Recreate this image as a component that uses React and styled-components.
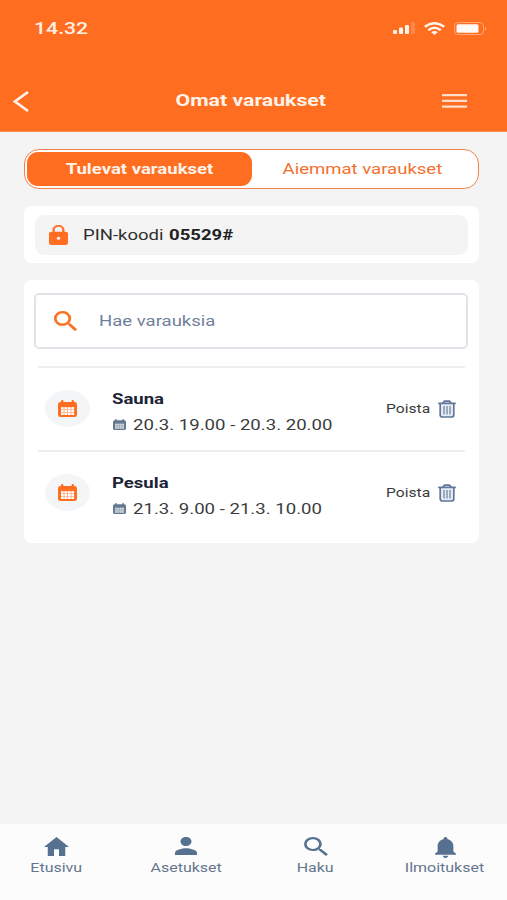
import React from "react";
import styled, { createGlobalStyle, css } from "styled-components";

const GlobalStyle = createGlobalStyle`
  * { box-sizing: border-box; }
  body { margin: 0; background: #f4f4f4; font-family: Roboto, "Liberation Sans", sans-serif; }
  button { font: inherit; border: 0; padding: 0; background: none; color: inherit; }
`;

const Screen = styled.div`
  width: 507px;
  height: 900px;
  display: flex;
  flex-direction: column;
  overflow: hidden;
  background: #f4f4f4;
`;

/* Wide lettering: Roboto widened horizontally around its anchor side. */
const Text = styled.span`
  display: inline-block;
  white-space: nowrap;
  line-height: 20px;
  font-size: ${(p) => p.$size || 15}px;
  font-weight: ${(p) => p.$weight || 400};
  color: ${(p) => p.$color || "#333"};
  transform: scaleX(${(p) => p.$wide || 1.22});
  transform-origin: ${(p) => (p.$anchor || "left")} center;
`;

const Icon = styled.svg.attrs({ preserveAspectRatio: "none" })`
  display: block;
  flex: none;
  width: ${(p) => p.$w}px;
  height: ${(p) => p.$h}px;
  fill: ${(p) => p.$color || "#56708f"};
`;

const Header = styled.header`
  height: 132px;
  flex: none;
  background: #ff6d20;
  border-bottom: 1px solid #fb8f56;
`;

const StatusBar = styled.div`
  height: 56px;
  padding: 0 20px 0 34px;
  display: flex;
  align-items: center;
  justify-content: space-between;
`;

const Clock = styled.div`
  padding-top: 2px;
`;

const StatusIcons = styled.div`
  display: flex;
  align-items: center;
  gap: 9px;
`;

const TitleBar = styled.div`
  height: 90px;
  padding: 0 40px 0 13px;
  display: grid;
  grid-template-columns: 28px 1fr 25px;
  align-items: center;
`;

const TitleSlot = styled.h1`
  margin: 0;
  height: 20px;
  line-height: 20px;
  font-size: 16px;
  text-align: center;
  padding-left: 18px;
`;

const Main = styled.main`
  flex: 1;
  padding: 17px 28px 0 24px;
  display: flex;
  flex-direction: column;
`;

const Tabs = styled.div`
  height: 40px;
  flex: none;
  padding: 2px;
  display: grid;
  grid-template-columns: 225px 1fr;
  background: #fff;
  border: 1.5px solid #f2824a;
  border-radius: 15px;
`;

const Tab = styled.button`
  display: flex;
  align-items: center;
  justify-content: center;
  border-radius: 11px;
  padding-right: ${(p) => (p.$active ? 0 : 4)}px;
  ${(p) => p.$active && css`background: #ff6d20;`}
`;

const Card = styled.section`
  background: #fff;
  border-radius: 8px;
  flex: none;
`;

const PinCard = styled(Card)`
  margin-top: 17px;
  height: 57px;
  padding: 9px 11px 8px;
`;

const PinRow = styled.div`
  height: 40px;
  padding-left: 14px;
  display: flex;
  align-items: center;
  background: #f4f4f4;
  border-radius: 9px;
`;

const PinLabel = styled.div`
  width: 86px;
  margin-left: 15px;
  flex: none;
`;

const ListCard = styled(Card)`
  margin-top: 17px;
  height: 263px;
  padding: 13px 11px 0 10px;
`;

const SearchBox = styled.div`
  height: 56px;
  padding-left: 18px;
  display: flex;
  align-items: center;
  gap: 22px;
  border: 2px solid #e0e4e8;
  border-radius: 5px;
  margin-bottom: 17px;
`;

const Row = styled.div`
  height: 84px;
  margin: 0 3px 0 4px;
  padding: 0 9px 0 7px;
  display: grid;
  grid-template-columns: 67px 1fr auto;
  align-items: center;
  border-top: 2px solid #eceeef;
`;

const Badge = styled.div`
  width: 45px;
  height: 37px;
  margin-bottom: 2px;
  border-radius: 50%;
  background: #f4f5f7;
  display: flex;
  align-items: center;
  justify-content: center;
`;

const Details = styled.div`
  display: flex;
  flex-direction: column;
  gap: 6px;
  padding-top: 5px;
`;

const When = styled.div`
  display: flex;
  align-items: center;
  gap: 7px;
  padding-left: 1px;
`;

const Remove = styled.button`
  display: flex;
  align-items: center;
  gap: 8px;
`;

const BottomNav = styled.nav`
  height: 76px;
  flex: none;
  display: grid;
  grid-template-columns: 113px 146px 113px 146px;
  background: #fcfcfc;
`;

const NavItem = styled.button`
  display: flex;
  flex-direction: column;
  align-items: center;
`;

const NavIcon = styled.div`
  height: 34px;
  padding-top: 13px;
`;

const SearchIcon = ({ $bold, ...p }) => (
  <Icon viewBox="3 3 17.5 17.5" {...p}>
    <path
      stroke={p.$color || "#56708f"}
      strokeWidth={$bold ? 0.2 : 0}
      d="M15.500 14h-.79l-.28-.27A6.471 6.471 0 0 0 16 9.500 6.500 6.500 0 1 0 9.500 16c1.610 0 3.090-.59 4.230-1.570l.27.28v.79l5 4.990L20.490 19l-4.990-5zm-6 0C7.010 14 5 11.990 5 9.500S7.010 5 9.500 5 14 7.010 14 9.500 11.990 14 9.500 14z"
    />
  </Icon>
);

const CalendarIcon = ({ $panel = "#fff", ...p }) => (
  <Icon viewBox="0 0 19 18" {...p}>
    <path d="M2.500 2H3V1q0-1 1.200-1T5.400 1v1h8.200V1q0-1 1.200-1T16 1v1h.5Q19 2 19 4.500V15.500Q19 18 16.500 18H2.500Q0 18 0 15.500V4.500Q0 2 2.500 2z" />
    <path
      fill={$panel}
      d="M3 7.600h2.600v2.200H3zM6.500 7.600h2.600v2.200H6.500zM10 7.600h2.600v2.200H10zM13.500 7.600h2.600v2.200h-2.600zM3 10.600h2.600v2.200H3zM6.500 10.600h2.600v2.200H6.500zM10 10.600h2.600v2.200H10zM13.500 10.600h2.600v2.200h-2.600zM3 13.600h2.600v2.200H3zM6.500 13.600h2.600v2.200H6.500zM10 13.600h2.600v2.200H10zM13.500 13.600h2.600v2.200h-2.600z"
    />
    <path fill={$panel} opacity=".45" d="M3 7.600h13.100v8.200H3z" />
  </Icon>
);

const TrashIcon = () => (
  <Icon viewBox="0 0 18 18" $w={18} $h={18}>
    <path fill="#e9edf3" d="M2 3.500h14v11.200q0 2.500-2.500 2.500h-9Q2 17.200 2 14.700z" />
    <path
      fill="none"
      stroke="#60789a"
      strokeWidth="1.700"
      strokeLinecap="round"
      d="M.9 3.400h16.200M4.800 3L6.500 1.200h5L13.200 3M2.200 3.500v11.200Q2.200 17 4.500 17h9Q15.800 17 15.800 14.700V3.500"
    />
    <path fill="none" stroke="#7187a6" strokeWidth="1.300" d="M6 6v8.500M9 6v8.500M12 6v8.500" />
  </Icon>
);

const bookings = [
  { name: "Sauna", time: "20.3. 19.00 - 20.3. 20.00" },
  { name: "Pesula", time: "21.3. 9.00 - 21.3. 10.00" },
];

const Booking = ({ name, time }) => (
  <Row>
    <Badge>
      <CalendarIcon $w={19} $h={17} $color="#ff6d20" />
    </Badge>
    <Details>
      <Text $size={15.2} $weight={700} $color="#1b2337">{name}</Text>
      <When>
        <CalendarIcon $w={13} $h={11} $color="#65788f" $panel="#d3dae2" />
        <Text $size={15.25} $color="#3c3c3c">{time}</Text>
      </When>
    </Details>
    <Remove>
      <Text $size={12.8} $color="#3c3c3c" $anchor="right">Poista</Text>
      <TrashIcon />
    </Remove>
  </Row>
);

const NavLabel = ({ children }) => (
  <Text $size={13.1} $color="#64768e" $anchor="center">{children}</Text>
);

export default function App() {
  return (
    <>
      <GlobalStyle />
      <Screen>
        <Header>
          <StatusBar>
            <Clock>
              <Text $size={16.6} $wide={1.28} $weight={500} $color="#fff1e8">14.32</Text>
            </Clock>
            <StatusIcons>
              <Icon viewBox="0 0 22 12" $w={22} $h={12} $color="#fff3ea">
                <rect x="0" y="8" width="4" height="4" rx="1" />
                <rect x="6" y="5.500" width="4" height="6.500" rx="1" />
                <rect x="12" y="3" width="4" height="9" rx="1" />
                <rect x="18" y="0" width="4" height="12" rx="1" opacity=".2" />
              </Icon>
              <Icon viewBox="0 0 21 13" $w={21} $h={13} $color="#fff3ea">
                <path fill="none" stroke="#fff3ea" strokeWidth="2.500" d="M.8 4.800Q10.500-2.400 20.200 4.800M4.300 8.200Q10.500 3.200 16.700 8.200" />
                <path d="M7.200 10.200Q10.500 7.600 13.800 10.200L10.500 13z" />
              </Icon>
              <Icon viewBox="0 0 33 13" $w={33} $h={13} $color="#fffaf6">
                <rect x=".5" y=".5" width="29" height="12" rx="3.500" fill="none" stroke="#ffa674" />
                <rect x="2.500" y="2.200" width="22" height="8.600" rx="1.500" />
                <path d="M31 4.500q1.800 2 0 4z" opacity=".6" />
              </Icon>
            </StatusIcons>
          </StatusBar>
          <TitleBar>
            <Icon viewBox="0 0 16 21" $w={16} $h={21}>
              <path fill="none" stroke="#fff1ea" strokeWidth="2.700" d="M15 1L2 10.500L15 20" />
            </Icon>
            <TitleSlot>
              <Text $size={16.6} $wide={1.28} $weight={700} $color="#fff3ea" $anchor="center">Omat varaukset</Text>
            </TitleSlot>
            <Icon viewBox="0 0 25 14" $w={25} $h={14} $color="#ffdccb">
              <path d="M0 0h25v2.300H0zM0 5.700h25v2.300H0zM0 11.400h25v2.300H0z" />
            </Icon>
          </TitleBar>
        </Header>
        <Main>
          <Tabs>
            <Tab $active>
              <Text $size={15.2} $weight={700} $color="#fff3ea" $anchor="center">Tulevat varaukset</Text>
            </Tab>
            <Tab>
              <Text $size={15.2} $color="#f3702d" $anchor="center">Aiemmat varaukset</Text>
            </Tab>
          </Tabs>
          <PinCard>
            <PinRow>
              <Icon viewBox="4 1 16 21" $w={19} $h={20} $color="#ff6d20">
                <path d="M18 8h-1V6c0-2.760-2.240-5-5-5S7 3.240 7 6v2H6c-1.100 0-2 .9-2 2v10c0 1.100.9 2 2 2h12c1.100 0 2-.9 2-2V10c0-1.100-.9-2-2-2zM8.900 8V6a3.100 3.100 0 0 1 6.200 0v2zM12 13.400a1.600 1.600 0 1 1 0 3.200 1.600 1.600 0 0 1 0-3.200z" fillRule="evenodd" />
              </Icon>
              <PinLabel>
                <Text $size={15.2} $color="#2e2e2e">PIN-koodi</Text>
              </PinLabel>
              <Text $size={15.2} $weight={700} $color="#222">05529#</Text>
            </PinRow>
          </PinCard>
          <ListCard>
            <SearchBox>
              <SearchIcon $bold $w={23} $h={20} $color="#f97023" />
              <Text $size={15.2} $color="#71809a">Hae varauksia</Text>
            </SearchBox>
            {bookings.map((b) => (
              <Booking key={b.name} {...b} />
            ))}
          </ListCard>
        </Main>
        <BottomNav>
          <NavItem>
            <NavIcon>
              <Icon viewBox="2 3 20 17" $w={25} $h={19}>
                <path d="M10 20v-6h4v6h5v-8h3L12 3 2 12h3v8z" />
              </Icon>
            </NavIcon>
            <NavLabel>Etusivu</NavLabel>
          </NavItem>
          <NavItem>
            <NavIcon>
              <Icon viewBox="4 4 16 16" $w={22} $h={18}>
                <path d="M12 12c2.210 0 4-1.790 4-4s-1.790-4-4-4-4 1.790-4 4 1.790 4 4 4zm0 2c-2.670 0-8 1.340-8 4v2h16v-2c0-2.660-5.330-4-8-4z" />
              </Icon>
            </NavIcon>
            <NavLabel>Asetukset</NavLabel>
          </NavItem>
          <NavItem>
            <NavIcon>
              <SearchIcon $w={24} $h={19} />
            </NavIcon>
            <NavLabel>Haku</NavLabel>
          </NavItem>
          <NavItem>
            <NavIcon>
              <Icon viewBox="4 2.5 16 19.5" $w={21} $h={21}>
                <path d="M12 22c1.100 0 2-.9 2-2h-4c0 1.100.89 2 2 2zm6-6v-5c0-3.070-1.640-5.640-4.500-6.320V4c0-.83-.67-1.500-1.500-1.500s-1.500.67-1.500 1.500v.68C7.630 5.360 6 7.920 6 11v5l-2 2v1h16v-1l-2-2z" />
              </Icon>
            </NavIcon>
            <NavLabel>Ilmoitukset</NavLabel>
          </NavItem>
        </BottomNav>
      </Screen>
    </>
  );
}
